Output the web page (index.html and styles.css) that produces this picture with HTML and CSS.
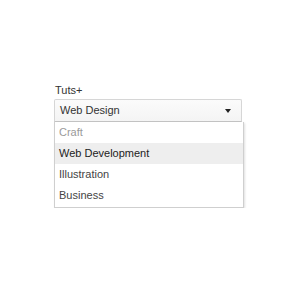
FILE: index.html
```html
<!DOCTYPE html>
<html lang="en">
<head>
  <meta charset="UTF-8" />
  <title>Tuts+ Dropdown</title>
  <link rel="stylesheet" href="styles.css">
</head>
<body>

  <div class="field">
    <label class="field-label">Tuts+</label>

    <div class="select">
      <span class="select-value">Web Design</span>
      <span class="select-arrow"></span>
    </div>

    <ul class="options">
      <li class="option option-muted">Craft</li>
      <li class="option option-active">Web Development</li>
      <li class="option">Illustration</li>
      <li class="option">Business</li>
    </ul>
  </div>

</body>
</html>
```

FILE: styles.css
```css
* {
  box-sizing: border-box;
}

body {
  margin: 0;
  background: #ffffff;
  font-family: 'Liberation Sans', Arial, Helvetica, sans-serif;
  font-size: 11px;
  color: #333;
}

.field {
  width: 190px;
  margin: 84px 0 0 54px;
}

.field-label {
  display: block;
  line-height: 13px;
  margin: 0 0 2px 1px;
  color: #333;
}

.select {
  display: flex;
  align-items: center;
  justify-content: space-between;
  width: 188px;
  height: 23px;
  padding: 0 10px 0 5px;
  background: linear-gradient(#fbfbfb, #f4f4f4);
  border: 1px solid #d6d6d6;
  border-bottom-color: #c4c4c4;
  border-radius: 2px 2px 0 0;
  line-height: 21px;
}

.select-arrow {
  width: 0;
  height: 0;
  border-left: 3.5px solid transparent;
  border-right: 3.5px solid transparent;
  border-top: 4px solid #222;
}

.options {
  list-style: none;
  margin: 0;
  padding: 0 0 1px;
  background: #ffffff;
  border: 1px solid #cfcfcf;
  border-top: none;
  box-shadow: 1px 1px 2px rgba(0, 0, 0, 0.12);
}

.option {
  height: 21px;
  line-height: 21px;
  padding-left: 4px;
  color: #444;
}

.option-muted {
  color: #9a9a9a;
}

.option-active {
  background: #eeeeee;
  color: #222;
}
```
